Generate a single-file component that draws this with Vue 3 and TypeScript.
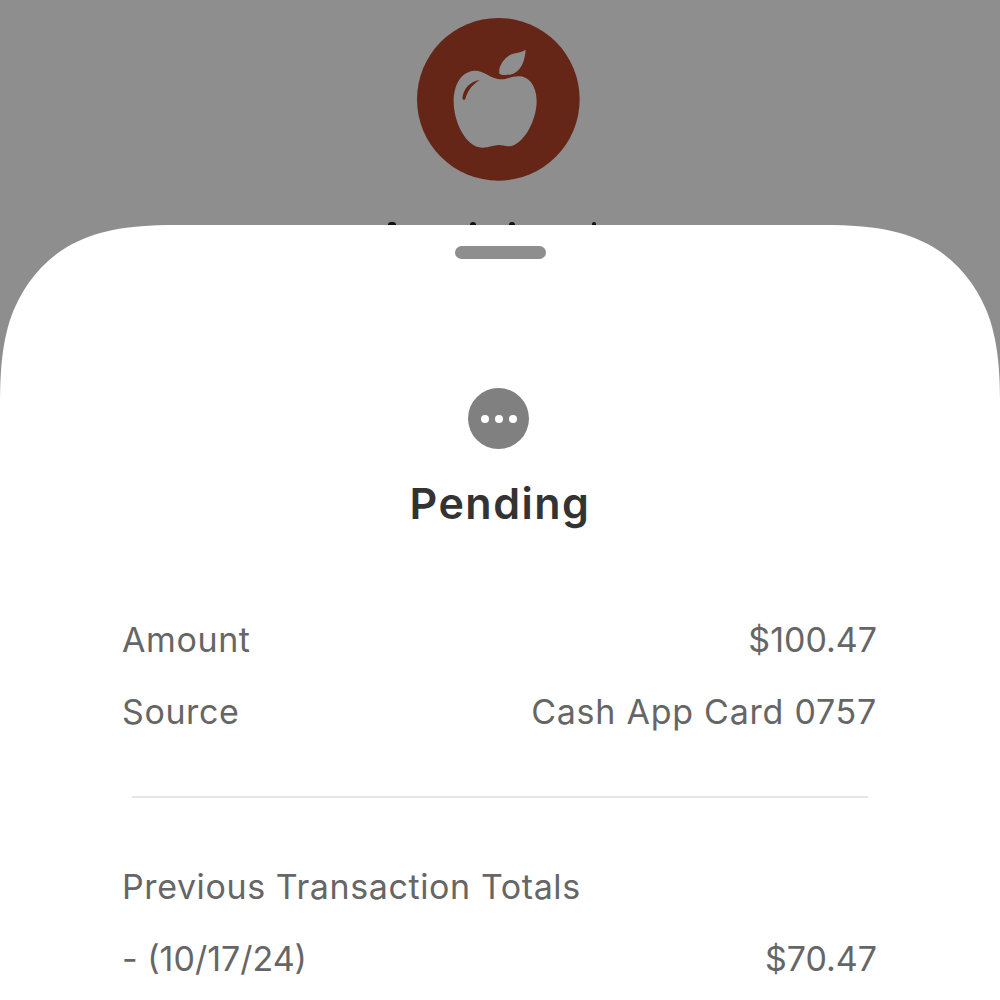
<script setup lang="ts">
interface Row {
  label: string;
  value?: string;
}

const topRows: Row[] = [
  { label: 'Amount', value: '$100.47' },
  { label: 'Source', value: 'Cash App Card 0757' },
];

const bottomRows: Row[] = [
  { label: 'Previous Transaction Totals' },
  { label: '- (10/17/24)', value: '$70.47' },
];

// tops of the title's tall letters that stick out above the sheet
const titleTips = [
  { left: 388, width: 8 },
  { left: 470, width: 6 },
  { left: 509, width: 6 },
  { left: 592, width: 4 },
];

// figures sit tighter than words in the reference
const isFigure = (text: string) => /^[$-]/.test(text);
</script>

<template>
  <div class="page">
    <div class="hero">
      <svg class="logo" viewBox="52 55 489 489" aria-label="Merchant logo">
        <circle cx="296" cy="299" r="244" fill="#652617" />
        <path
          fill="#8e8e8e"
          d="M300 239C320 240 340 228 362 230C395 234 411 268 411 305C411 350 385 415 345 435C325 445 312 436 297 436C280 436 262 447 238 443C195 433 162 365 162 305C162 255 185 215 225 213C250 212 275 237 300 239Z"
        />
        <path
          fill="#8e8e8e"
          d="M378 150C376 175 370 205 345 220C330 228 305 228 299 222C295 200 315 170 340 162C355 158 368 158 378 150Z"
        />
        <path
          fill="#652617"
          d="M240 241C212 245 192 265 188 295C190 303 196 303 198 295C205 272 218 255 240 241Z"
        />
      </svg>
      <span
        v-for="tip in titleTips"
        :key="tip.left"
        class="title-tip"
        :style="{ left: tip.left + 'px', width: tip.width + 'px' }"
      />
    </div>

    <div class="sheet">
      <div class="grabber" />

      <div class="status-icon">
        <span class="dot" />
        <span class="dot" />
        <span class="dot" />
      </div>
      <h1 class="status">Pending</h1>

      <div class="rows">
        <div v-for="row in topRows" :key="row.label" class="row">
          <span :class="{ figure: isFigure(row.label) }">{{ row.label }}</span>
          <span v-if="row.value" class="value" :class="{ figure: isFigure(row.value) }">{{ row.value }}</span>
        </div>
      </div>

      <div class="divider" />

      <div class="rows">
        <div v-for="row in bottomRows" :key="row.label" class="row">
          <span :class="{ figure: isFigure(row.label) }">{{ row.label }}</span>
          <span v-if="row.value" class="value" :class="{ figure: isFigure(row.value) }">{{ row.value }}</span>
        </div>
      </div>
    </div>
  </div>
</template>

<style>
html,
body {
  margin: 0;
  background: #8e8e8e;
}
</style>

<style scoped>
.page {
  width: 1000px;
  height: 1000px;
  overflow: hidden;
  display: flex;
  flex-direction: column;
  background: #8e8e8e;
  font-family: Inter, "Liberation Sans", sans-serif;
}

.hero {
  position: relative;
  height: 225px;
  flex-shrink: 0;
  display: flex;
  justify-content: center;
  box-sizing: border-box;
  padding: 18px 4px 0 0;
}

.logo {
  width: 163px;
  height: 163px;
}

.title-tip {
  position: absolute;
  top: 222px;
  height: 3px;
  border-radius: 3px 3px 0 0;
  background: #111;
}

.sheet {
  flex: 1;
  display: flex;
  flex-direction: column;
  align-items: center;
  background: #fff;
  padding: 21px 122px 0;
  /* iOS style squircle, a plain border-radius comes out too round */
  clip-path: path("M0 180C0 140 3 118 10 95C20 65 40 38 67 22C95 6 125 0 175 0L825 0C875 0 905 6 933 22C960 38 980 65 990 95C997 118 1000 140 1000 180L1000 775L0 775Z");
}

.grabber {
  width: 91px;
  height: 13px;
  border-radius: 7px;
  background: #8e8e8e;
}

.status-icon {
  width: 61px;
  height: 61px;
  margin: 129px 3px 0 0;
  border-radius: 50%;
  background: #808080;
  display: flex;
  align-items: center;
  justify-content: center;
  gap: 6px;
}

.dot {
  width: 8px;
  height: 8px;
  border-radius: 50%;
  background: #fff;
}

.status {
  margin: 26px 0 0;
  font-size: 43px;
  line-height: 56px;
  font-weight: 600;
  letter-spacing: 1.5px;
  color: #333;
}

.rows {
  width: 100%;
  box-sizing: border-box;
  padding-right: 1px;
  display: flex;
  flex-direction: column;
  gap: 30px;
}

.row {
  display: flex;
  justify-content: space-between;
  font-size: 34px;
  line-height: 42px;
  font-weight: 400;
  letter-spacing: 0.6px;
  color: #666;
}

.row .value {
  letter-spacing: 0.75px;
}

.row .figure {
  letter-spacing: 0;
}

.status + .rows {
  margin-top: 88px;
}

.divider {
  width: 736px;
  height: 2px;
  margin: 63px 0 68px;
  background: #e6e6e6;
}
</style>
